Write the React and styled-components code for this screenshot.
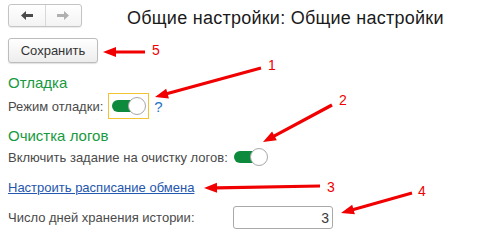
import React from "react";
import styled, { createGlobalStyle } from "styled-components";

const GlobalStyle = createGlobalStyle`
  html, body { margin: 0; padding: 0; background: #fff; }
  body { font-family: "Liberation Sans", Arial, sans-serif; }
  * { box-sizing: border-box; }
`;

const Page = styled.div`
  position: relative;
  width: 495px;
  height: 241px;
  padding: 4px 8px 0 8px;
  display: flex;
  flex-direction: column;
  align-items: flex-start;
  overflow: hidden;
`;

const Header = styled.div`
  display: flex;
  align-items: flex-start;
  height: 23px;
`;

const NavGroup = styled.div`
  display: flex;
  width: 74px;
  height: 23px;
  border: 1px solid #c4c4c4;
  border-radius: 3px;
  background: linear-gradient(#ffffff, #f3f3f3);
  box-shadow: 0 1px 1px rgba(0, 0, 0, 0.08);
`;

const NavButton = styled.div`
  flex: 1;
  display: flex;
  align-items: center;
  justify-content: center;
  border-left: ${(p) => (p.$divider ? "1px solid #d8d8d8" : "none")};
`;

const Title = styled.div`
  margin-left: 45px;
  margin-top: 4px;
  font-size: 18px;
  line-height: 20px;
  letter-spacing: 0.25px;
  color: #1a1a1a;
  white-space: nowrap;
`;

const SaveButton = styled.div`
  margin-top: 11px;
  width: 90px;
  height: 25px;
  border: 1px solid #bcbcbc;
  border-radius: 3px;
  background: linear-gradient(#ffffff, #ededed);
  box-shadow: 0 1px 1px rgba(0, 0, 0, 0.12);
  display: flex;
  align-items: center;
  justify-content: center;
  font-size: 13px;
  color: #333;
`;

const GroupTitle = styled.div`
  margin-top: ${(p) => p.$top}px;
  font-size: 15px;
  line-height: 17px;
  color: #179a40;
  white-space: nowrap;
`;

const Row = styled.div`
  margin-top: ${(p) => p.$top}px;
  display: flex;
  align-items: center;
  height: ${(p) => p.$h}px;
`;

const Label = styled.div`
  font-size: 13px;
  line-height: 15px;
  color: #4a4a4a;
  white-space: nowrap;
  width: ${(p) => (p.$w ? `${p.$w}px` : "auto")};
  margin-right: ${(p) => (p.$gap ? `${p.$gap}px` : "0")};
`;

const FocusBox = styled.div`
  width: 41px;
  height: 26px;
  border: 1px solid #f1c232;
  display: flex;
  align-items: center;
  padding-left: 3px;
`;

const Toggle = styled.div`
  position: relative;
  width: 34px;
  height: 18px;
  display: flex;
  align-items: center;
`;

const Track = styled.div`
  width: 28px;
  height: 12px;
  border-radius: 6px;
  background: #0d8a3c;
`;

const Knob = styled.div`
  position: absolute;
  right: 0;
  top: 0;
  width: 18px;
  height: 18px;
  border-radius: 50%;
  background: #fff;
  border: 1px solid #a8a8a8;
`;

const Help = styled.div`
  margin-left: 5px;
  font-size: 15px;
  line-height: 17px;
  color: #1f74c4;
`;

const Link = styled.a`
  margin-top: 12px;
  font-size: 13px;
  line-height: 15px;
  color: #2456ad;
  text-decoration: underline;
  white-space: nowrap;
`;

const NumberInput = styled.div`
  width: 100px;
  height: 23px;
  border: 1px solid #a9a9a9;
  border-radius: 3px;
  display: flex;
  align-items: center;
  justify-content: flex-end;
  padding-right: 3px;
  font-size: 14px;
  color: #3a3a3a;
`;

const Overlay = styled.svg`
  position: absolute;
  left: 0;
  top: 0;
  pointer-events: none;
`;

const Mark = styled.div`
  position: absolute;
  font-size: 14px;
  line-height: 14px;
  color: #f00000;
`;

function arrowPoints(from, to, len = 13, half = 5, w = 1.6) {
  const [x1, y1] = from;
  const [x2, y2] = to;
  const dx = x2 - x1;
  const dy = y2 - y1;
  const d = Math.hypot(dx, dy);
  const ux = dx / d;
  const uy = dy / d;
  const nx = -uy;
  const ny = ux;
  const bx = x2 - ux * len;
  const by = y2 - uy * len;
  const pts = [
    [x1 + nx * w, y1 + ny * w],
    [bx + nx * w, by + ny * w],
    [bx + nx * half, by + ny * half],
    [x2, y2],
    [bx - nx * half, by - ny * half],
    [bx - nx * w, by - ny * w],
    [x1 - nx * w, y1 - ny * w],
  ];
  return pts.map((p) => p.map((v) => v.toFixed(1)).join(",")).join(" ");
}

const arrows = [
  { from: [261, 68], to: [155, 97] },
  { from: [332, 105], to: [263, 142] },
  { from: [320, 186], to: [204, 188] },
  { from: [412, 193], to: [341, 213] },
  { from: [145, 52], to: [103, 52] },
];

const marks = [
  { n: "1", x: 268, y: 58 },
  { n: "2", x: 339, y: 93 },
  { n: "3", x: 327, y: 180 },
  { n: "4", x: 418, y: 184 },
  { n: "5", x: 152, y: 43 },
];

const ArrowLeft = ({ color }) => (
  <svg width="12" height="9" viewBox="0 0 12 9">
    <polygon points="0,4.5 5,0 5,3 12,3 12,6 5,6 5,9" fill={color} />
  </svg>
);

const ArrowRight = ({ color }) => (
  <svg width="12" height="9" viewBox="0 0 12 9">
    <polygon points="12,4.5 7,0 7,3 0,3 0,6 7,6 7,9" fill={color} />
  </svg>
);

export default function App() {
  return (
    <>
      <GlobalStyle />
      <Page>
        <Header>
          <NavGroup>
            <NavButton>
              <ArrowLeft color="#4a4a4a" />
            </NavButton>
            <NavButton $divider>
              <ArrowRight color="#b0b0b0" />
            </NavButton>
          </NavGroup>
          <Title>Общие настройки: Общие настройки</Title>
        </Header>

        <SaveButton>Сохранить</SaveButton>

        <GroupTitle $top={11}>Отладка</GroupTitle>
        <Row $top={2} $h={26}>
          <Label $gap={5}>Режим отладки:</Label>
          <FocusBox>
            <Toggle>
              <Track />
              <Knob />
            </Toggle>
          </FocusBox>
          <Help>?</Help>
        </Row>

        <GroupTitle $top={8}>Очистка логов</GroupTitle>
        <Row $top={2} $h={22}>
          <Label $gap={6}>Включить задание на очистку логов:</Label>
          <Toggle>
            <Track />
            <Knob />
          </Toggle>
        </Row>

        <Link href="#">Настроить расписание обмена</Link>

        <Row $top={11} $h={23}>
          <Label $w={225}>Число дней хранения истории:</Label>
          <NumberInput>3</NumberInput>
        </Row>

        <Overlay width="495" height="241" viewBox="0 0 495 241">
          {arrows.map((a, i) => (
            <polygon key={i} points={arrowPoints(a.from, a.to)} fill="#f00000" />
          ))}
        </Overlay>
        {marks.map((m) => (
          <Mark key={m.n} style={{ left: m.x, top: m.y }}>
            {m.n}
          </Mark>
        ))}
      </Page>
    </>
  );
}
